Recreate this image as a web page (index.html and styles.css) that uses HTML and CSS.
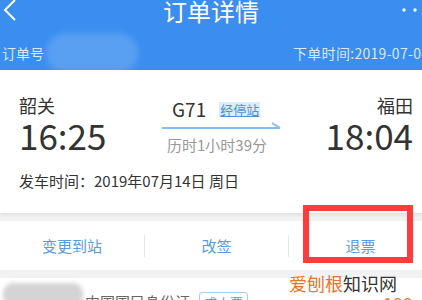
FILE: index.html
```html
<!DOCTYPE html>
<html>

<head>
    <meta charset="UTF-8">
    <meta name="viewport" content="width=device-width, initial-scale=1.0">
    <title>订单详情</title>
    <link rel="stylesheet" href="styles.css">
</head>

<body>
    <div class="header">
        <div class="topbar">
            <svg class="back" width="16" height="22" viewBox="0 0 16 22">
                <polyline points="14,0 4,10 14,20" fill="none" stroke="#fff" stroke-width="2"/>
            </svg>
            <div class="title">订单详情</div>
            <svg class="more" width="30" height="22" viewBox="0 0 30 22">
                <circle cx="4" cy="10" r="1.7" fill="#fff"/>
                <circle cx="15" cy="10" r="1.7" fill="#fff"/>
                <circle cx="26" cy="10" r="1.7" fill="#fff"/>
            </svg>
        </div>
        <div class="order-row">
            <span class="order-label">订单号</span>
            <span class="order-blur"></span>
            <span class="order-time">下单时间:2019-07-08 15:32</span>
        </div>
    </div>

    <div class="card">
        <div class="route">
            <div class="station">
                <div class="station-name">韶关</div>
                <div class="station-time">16:25</div>
            </div>
            <div class="train">
                <div class="train-top">
                    <span class="train-no">G71</span>
                    <span class="stops">经停站</span>
                </div>
                <svg class="arrow" width="120" height="8" viewBox="0 0 120 8">
                    <line x1="0" y1="6" x2="118" y2="6" stroke="#86bdf4" stroke-width="2"/>
                    <line x1="110" y1="1" x2="118" y2="6" stroke="#86bdf4" stroke-width="2"/>
                </svg>
                <div class="duration">历时1小时39分</div>
            </div>
            <div class="station station-end">
                <div class="station-name">福田</div>
                <div class="station-time">18:04</div>
            </div>
        </div>
        <div class="depart">发车时间：2019年07月14日 周日</div>
    </div>

    <div class="actions">
        <div class="action">变更到站</div>
        <div class="action">改签</div>
        <div class="action">退票</div>
    </div>

    <div class="passenger">
        <span class="avatar"></span>
        <span class="id-type">中国国民身份证</span>
        <span class="ticket-type">成人票</span>
        <span class="price">199</span>
    </div>

    <div class="highlight"></div>
    <div class="watermark"><span class="wm-orange">爱刨根</span>知识网</div>
</body>
</html>
```

FILE: styles.css
```css
body {
    margin: 0;
    width: 422px;
    height: 300px;
    overflow: hidden;
    position: relative;
    background-color: #f2f2f2;
    font-family: "Noto Sans CJK SC", sans-serif;
    color: #333;
}

.header {
    background-color: #3a8ef0;
    color: #fff;
    height: 70px;
}

.topbar {
    display: grid;
    grid-template-columns: 1fr auto 1fr;
    align-items: center;
    height: 22px;
}

.back {
    margin-left: 1px;
}

.title {
    font-size: 24px;
    line-height: 22px;
}

.more {
    justify-self: end;
    margin-right: -8px;
}

.order-row {
    display: flex;
    align-items: center;
    height: 48px;
    box-sizing: border-box;
    padding-top: 14px;
    font-size: 14px;
    line-height: 20px;
    color: rgba(255, 255, 255, 0.82);
    white-space: nowrap;
}

.order-label {
    padding-left: 2px;
}

.order-blur {
    width: 92px;
    height: 40px;
    margin-left: 2px;
    border-radius: 20px;
    background-color: rgba(255, 255, 255, 0.16);
    filter: blur(3px);
}

.order-time {
    margin-left: auto;
    width: 129px;
    overflow: hidden;
    letter-spacing: 0.3px;
}

.card {
    background-color: #fff;
    padding: 23px 9px 22px 19px;
    box-shadow: 0 2px 4px rgba(0, 0, 0, 0.08);
    margin-bottom: 8px;
}

.route {
    display: grid;
    grid-template-columns: 143px 120px 1fr;
}

.station-name {
    font-size: 18px;
    line-height: 24px;
}

.station-time {
    font-size: 35px;
    line-height: 36px;
}

.station-end {
    text-align: right;
}

.train {
    padding-top: 4px;
}

.train-top {
    display: flex;
    align-items: center;
    padding-left: 10px;
    height: 24px;
}

.train-no {
    font-size: 19px;
    line-height: 24px;
}

.stops {
    margin-left: 13px;
    padding: 0 1px;
    font-size: 13px;
    line-height: 15px;
    color: #4a90e2;
    background-color: #dcecfb;
    text-decoration: underline;
}

.arrow {
    display: block;
    margin-top: 1px;
}

.duration {
    margin-top: 5px;
    padding-left: 5px;
    font-size: 15px;
    line-height: 20px;
    color: #999;
}

.depart {
    margin-top: 16px;
    font-size: 15px;
    line-height: 20px;
}

.actions {
    display: grid;
    grid-template-columns: repeat(3, 144px);
    align-items: center;
    height: 49px;
    background-color: #fff;
    margin-bottom: 8px;
}

.action {
    text-align: center;
    font-size: 15px;
    line-height: 22px;
    color: #5a9ae0;
}

.action + .action {
    border-left: 1px solid #e6e6e6;
}

.passenger {
    display: flex;
    align-items: flex-start;
    height: 30px;
    background-color: #fff;
    padding-top: 5px;
    font-size: 15px;
    line-height: 20px;
    white-space: nowrap;
}

.avatar {
    width: 80px;
    height: 24px;
    margin-left: 3px;
    border-radius: 10px;
    background-color: #d4d4d4;
    filter: blur(2px);
}

.id-type {
    margin-left: 2px;
    margin-top: 9px;
    color: #666;
}

.ticket-type {
    margin-left: 9px;
    margin-top: 9px;
    padding: 0 4px;
    border: 1px solid #a8cdf3;
    border-radius: 3px;
    font-size: 13px;
    color: #5a9ae0;
}

.price {
    margin-left: auto;
    margin-right: 9px;
    margin-top: 10px;
    font-size: 18px;
    color: #f57a30;
}

.highlight {
    position: absolute;
    left: 303px;
    top: 205px;
    width: 110px;
    height: 58px;
    box-sizing: border-box;
    border: 6px solid #ff3b3b;
}

.watermark {
    position: absolute;
    left: 289px;
    top: 271px;
    font-size: 18px;
    line-height: 24px;
    color: #333;
}

.wm-orange {
    color: #e8732a;
}
```
